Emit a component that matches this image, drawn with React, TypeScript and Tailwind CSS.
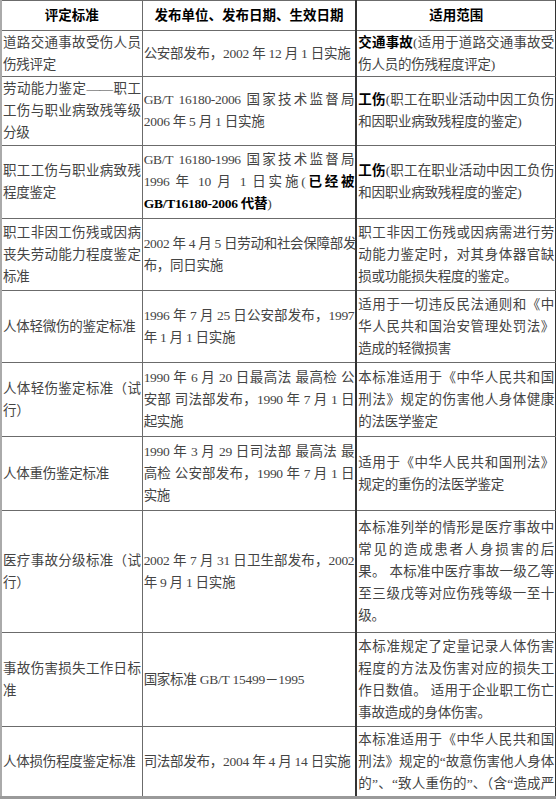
import React from "react";

type Seg = string | { b: string };
type Line = Seg | Seg[];

type Row = {
  h: number;
  c1: Line[];
  c2: Line[];
  c3: Line[];
  fullLast?: boolean;
};

const rows: Row[] = [
  {
    h: 46,
    c1: ["道路交通事故受伤人员", "伤残评定"],
    c2: ["公安部发布，2002 年 12 月 1 日实施"],
    c3: [[{ b: "交通事故" }, "(适用于道路交通事故受"], "伤人员的伤残程度评定)"],
  },
  {
    h: 69,
    c1: ["劳动能力鉴定——职工", "工伤与职业病致残等级", "分级"],
    c2: ["GB/T 16180-2006 国家技术监督局", "2006 年 5 月 1 日实施"],
    c3: [[{ b: "工伤" }, "(职工在职业活动中因工负伤"], "和因职业病致残程度的鉴定)"],
  },
  {
    h: 73,
    c1: ["职工工伤与职业病致残", "程度鉴定"],
    c2: [
      "GB/T 16180-1996 国家技术监督局",
      ["1996 年 10 月 1 日实施(", { b: "已经被" }],
      [{ b: "GB/T16180-2006 代替" }, ")"],
    ],
    c3: [[{ b: "工伤" }, "(职工在职业活动中因工负伤"], "和因职业病致残程度的鉴定)"],
  },
  {
    h: 72,
    c1: ["职工非因工伤残或因病", "丧失劳动能力程度鉴定", "标准"],
    c2: ["2002 年 4 月 5 日劳动和社会保障部发", "布，同日实施"],
    c3: ["职工非因工伤残或因病需进行劳", "动能力鉴定时，对其身体器官缺", "损或功能损失程度的鉴定。"],
  },
  {
    h: 72,
    c1: ["人体轻微伤的鉴定标准"],
    c2: ["1996 年 7 月 25 日公安部发布，1997", "年 1 月 1 日实施"],
    c3: ["适用于一切违反民法通则和《中", "华人民共和国治安管理处罚法》", "造成的轻微损害"],
  },
  {
    h: 74,
    c1: ["人体轻伤鉴定标准（试", "行）"],
    c2: ["1990 年 6 月 20 日最高法 最高检 公", "安部 司法部发布，1990 年 7 月 1 日", "起实施"],
    c3: ["本标准适用于《中华人民共和国", "刑法》规定的伤害他人身体健康", "的法医学鉴定"],
  },
  {
    h: 74,
    c1: ["人体重伤鉴定标准"],
    c2: ["1990 年 3 月 29 日司法部 最高法 最", "高检 公安部发布，1990 年 7 月 1 日", "实施"],
    c3: ["适用于《中华人民共和国刑法》", "规定的重伤的法医学鉴定"],
  },
  {
    h: 122,
    c1: ["医疗事故分级标准（试", "行）"],
    c2: ["2002 年 7 月 31 日卫生部发布，2002", "年 9 月 1 日实施"],
    c3: [
      "本标准列举的情形是医疗事故中",
      "常见的造成患者人身损害的后",
      "果。 本标准中医疗事故一级乙等",
      "至三级戊等对应伤残等级一至十",
      "级。",
    ],
  },
  {
    h: 94,
    c1: ["事故伤害损失工作日标", "准"],
    c2: ["国家标准 GB/T 15499－1995"],
    c3: [
      "本标准规定了定量记录人体伤害",
      "程度的方法及伤害对应的损失工",
      "作日数值。 适用于企业职工伤亡",
      "事故造成的身体伤害。",
    ],
  },
  {
    h: 71,
    c1: ["人体损伤程度鉴定标准"],
    c2: ["司法部发布，2004 年 4 月 14 日实施"],
    c3: [
      "本标准适用于《中华人民共和国",
      "刑法》规定的\u201c故意伤害他人身体",
      "的\u201d、\u201c致人重伤的\u201d、（含\u201c造成严",
    ],
    fullLast: true,
  },
];

function renderSeg(s: Seg, i: number) {
  if (typeof s === "string") return <span key={i}>{s}</span>;
  return (
    <b key={i} className="font-bold text-black">
      {s.b}
    </b>
  );
}

// 每一行单独成块，除最后一行外两端对齐（模仿 Word 表格）
function Lines({ lines, fullLast }: { lines: Line[]; fullLast?: boolean }) {
  return (
    <>
      {lines.map((ln, i) => {
        const segs = Array.isArray(ln) ? ln : [ln];
        const justify = i < lines.length - 1 || fullLast;
        return (
          <div
            key={i}
            className={
              justify
                ? "text-justify [text-align-last:justify] whitespace-nowrap tracking-[-0.3px]"
                : "text-left whitespace-nowrap tracking-[-0.25px]"
            }
          >
            {segs.map(renderSeg)}
          </div>
        );
      })}
    </>
  );
}

export default function App() {
  const cell = "border border-[#6b6b6b] px-[1px] align-middle";
  const cell3 = `${cell} border-l-2 border-l-[#333] border-r-[#333]`;
  return (
    <div
      className="w-[556px] h-[799px] overflow-hidden bg-white text-[#444] text-[13.5px] leading-[22px]"
      style={{ fontFamily: '"Liberation Serif", "Noto Sans CJK SC", serif' }}
    >
      <table className="w-full table-fixed border-collapse border-b-[3px] border-b-[#9a9a9a]">
        <colgroup>
          <col className="w-[141px]" />
          <col className="w-[214px]" />
          <col className="w-[199px]" />
        </colgroup>
        <thead>
          <tr className="h-[30px]">
            <th className={`${cell} border-l-2 border-l-[#aaa] text-center font-bold text-black`}>
              评定标准
            </th>
            <th className={`${cell} text-center font-bold text-black`}>
              发布单位、发布日期、生效日期
            </th>
            <th className={`${cell3} text-center font-bold text-black`}>适用范围</th>
          </tr>
        </thead>
        <tbody>
          {rows.map((r, i) => (
            <tr key={i} style={{ height: r.h }}>
              <td className={`${cell} border-l-2 border-l-[#aaa]`}>
                <Lines lines={r.c1} />
              </td>
              <td className={cell}>
                <Lines lines={r.c2} />
              </td>
              <td className={cell3}>
                <Lines lines={r.c3} fullLast={r.fullLast} />
              </td>
            </tr>
          ))}
        </tbody>
      </table>
    </div>
  );
}
